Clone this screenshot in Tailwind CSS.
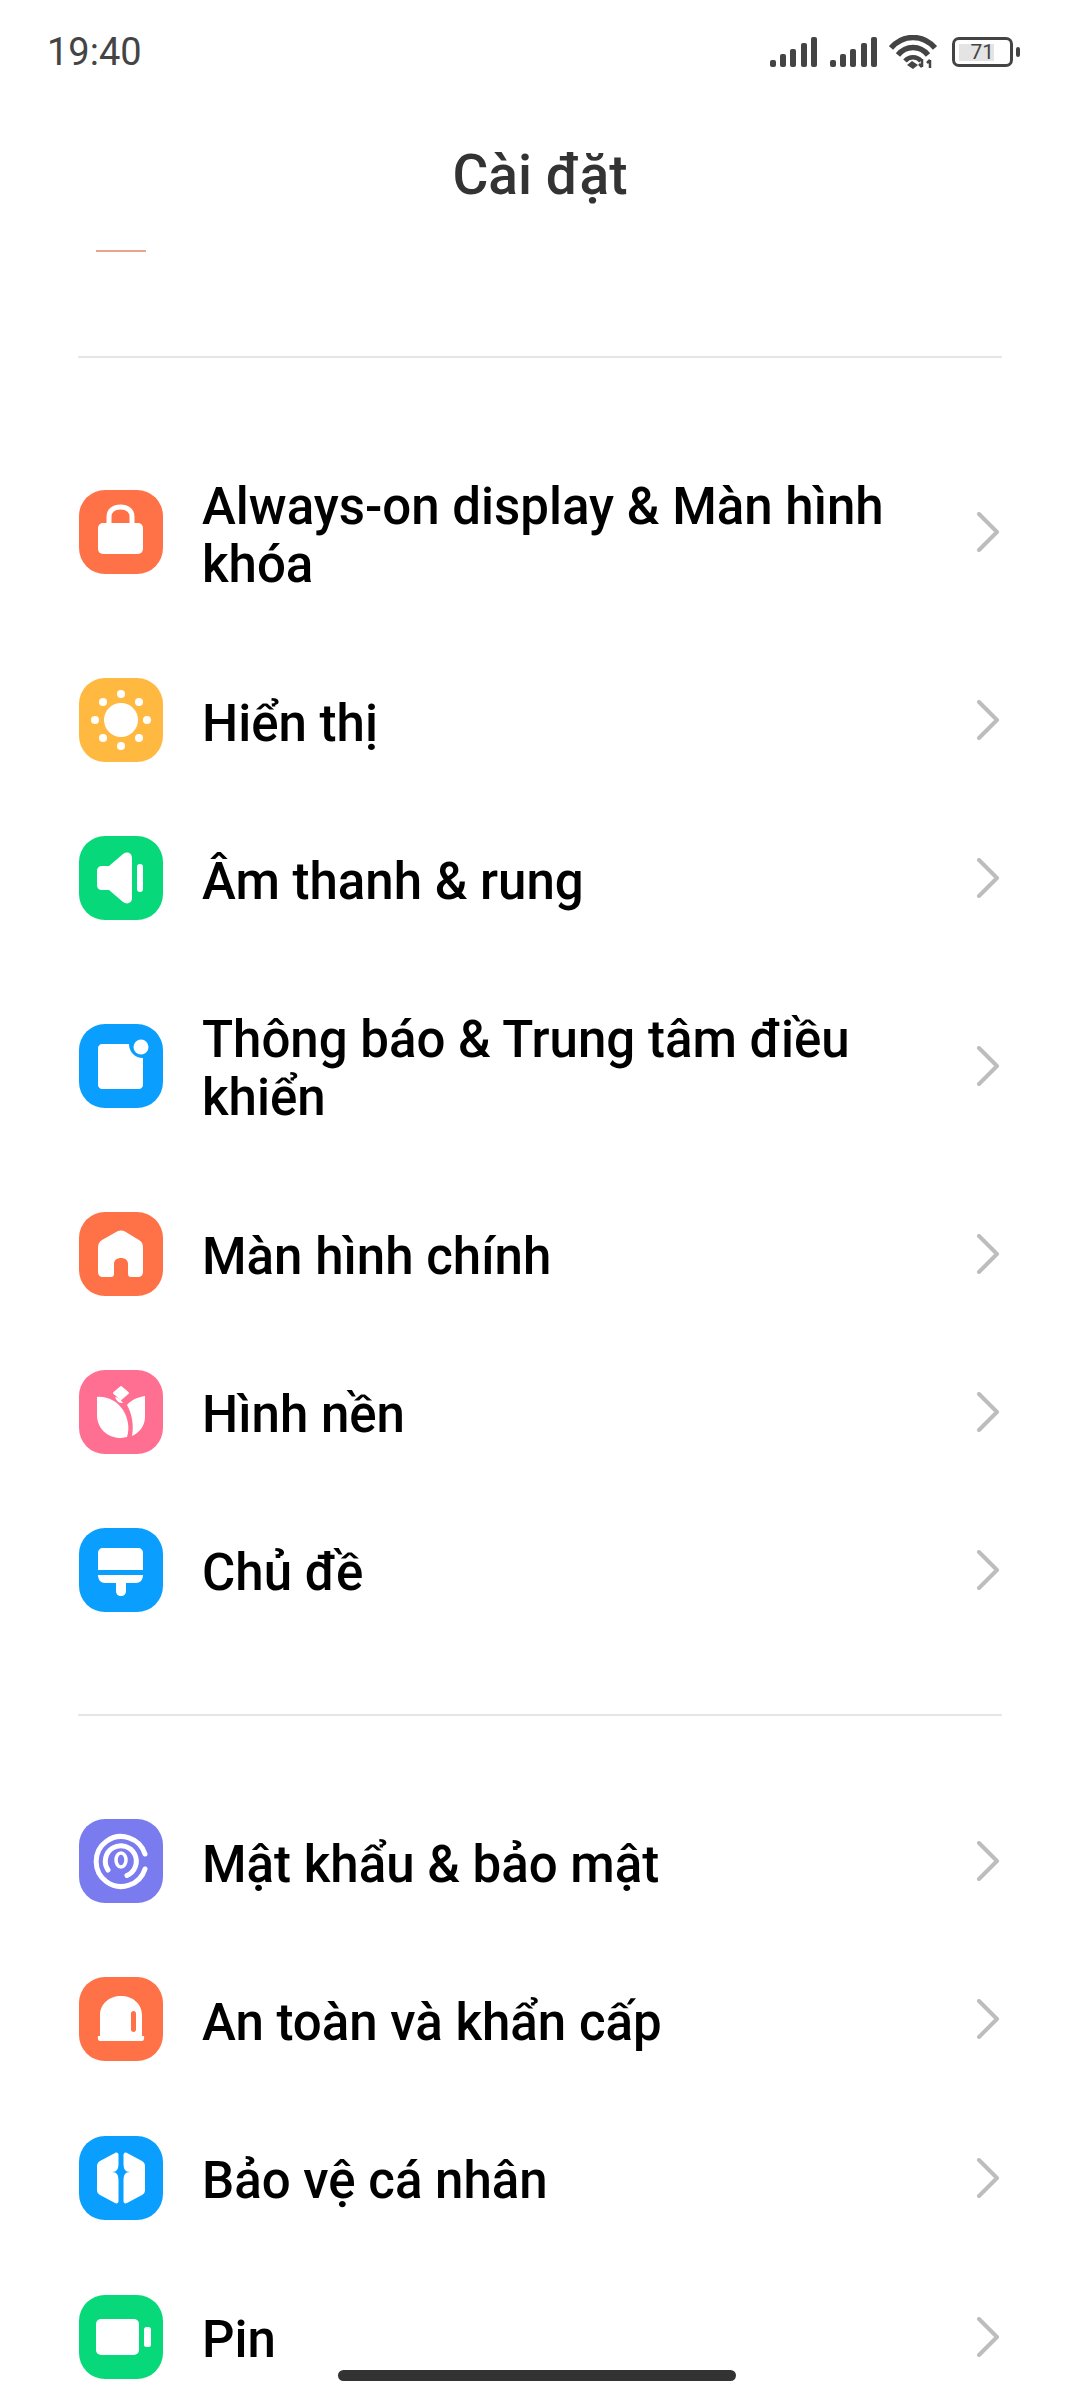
<!DOCTYPE html>
<html lang="vi">
<head>
  <meta charset="UTF-8" />
  <meta name="viewport" content="width=device-width, initial-scale=1.0"/>
  <title>Cài đặt</title>
  <script src="https://cdn.jsdelivr.net/npm/@tailwindcss/browser@4"></script>
</head>
<body class="bg-white">
<div class="relative w-[1080px] h-[2400px] overflow-hidden bg-white font-['Roboto',sans-serif]">

  <!-- STATUS BAR -->
  <div class="h-[104px] pl-[47px] pr-[60px] flex items-center justify-between text-[#444]">
    <span class="text-[38px] leading-none">19:40</span>
    <div class="flex items-center">
      <svg class="w-[47px] h-[30px]" viewBox="0 0 47 30" fill="#444"><rect x="0" y="23" width="6" height="7" rx="2"/><rect x="10" y="17" width="6" height="13" rx="2"/><rect x="20" y="12" width="6" height="18" rx="2"/><rect x="31" y="6" width="6" height="24" rx="2"/><rect x="41" y="0" width="6" height="30" rx="2"/></svg>
      <svg class="w-[47px] h-[30px] ml-[13px]" viewBox="0 0 47 30" fill="#444"><rect x="0" y="23" width="6" height="7" rx="2"/><rect x="10" y="17" width="6" height="13" rx="2"/><rect x="20" y="12" width="6" height="18" rx="2"/><rect x="31" y="6" width="6" height="24" rx="2"/><rect x="41" y="0" width="6" height="30" rx="2"/></svg>
      <svg class="w-[48px] h-[34px] ml-[12px]" viewBox="0 0 48 34" fill="none" stroke="#444" stroke-width="5.500"><path d="M2 13C14 -1 34 -1 46 13"/><path d="M9 20C17 10 31 10 39 20"/><path d="M16 26C20 21 28 21 32 26" stroke-width="4.500"/><path d="M23 26L29 30L24 34L18 30Z" fill="#444" stroke="none"/><path d="M33 24V32M33 32L30 29M41 33V25M41 25L38 28" stroke-width="2.500"/></svg>
      <div class="ml-[15px] w-[61px] h-[30px] rounded-[7px] border-[3px] border-[#444] pl-[4px] flex items-center">
        <div class="w-[35px] h-[17px] bg-[#e4e4e4] flex items-center justify-end text-[21px] leading-none text-[#444]">71</div>
      </div>
      <div class="ml-[3px] w-[4px] h-[10px] rounded-full bg-[#444]"></div>
    </div>
  </div>

  <!-- TITLE -->
  <h1 class="h-[144px] pb-[2px] flex items-center justify-center text-[55px] font-medium text-[#333]">Cài đặt</h1>

  <!-- scrolled-off icon edge -->
  <div class="mt-[2px] ml-[96px] w-[50px] h-[2px] bg-[#e9a48e]"></div>

  <div class="mt-[104px] mx-[78px] h-[2px] bg-[#e6e6e6]"></div>

  <!-- GROUP 1 -->
  <div class="mt-[65px]">
    <div class="h-[218px] pl-[79px] pr-[80px] flex items-center">
      <div class="w-[84px] h-[84px] shrink-0 rounded-[26px] bg-[#ff7146]">
        <svg class="w-[84px] h-[84px]" viewBox="0 0 84 84" fill="#fff"><path d="M30 36V27C30 20 35 17 41.500 17C48 17 53 20 53 27V36" fill="none" stroke="#fff" stroke-width="5"/><rect x="19" y="33" width="45" height="31" rx="5"/></svg>
      </div>
      <p class="ml-[39px] pt-[7px] w-[740px] text-[51px] font-medium leading-[58px] text-black">Always-on display &amp; Màn hình khóa</p>
      <svg class="ml-auto w-[24px] h-[40px]" viewBox="0 0 24 40" fill="none" stroke="#bdbdbd" stroke-width="4" stroke-linecap="round" stroke-linejoin="round"><path d="M3 2L21 20L3 38"/></svg>
    </div>
    <div class="h-[158px] pl-[79px] pr-[80px] flex items-center">
      <div class="w-[84px] h-[84px] shrink-0 rounded-[26px] bg-[#ffb940]">
        <svg class="w-[84px] h-[84px]" viewBox="0 0 84 84" fill="#fff"><circle cx="42" cy="42" r="17"/><circle cx="42" cy="16" r="4"/><circle cx="42" cy="68" r="4"/><circle cx="16" cy="42" r="4"/><circle cx="68" cy="42" r="4"/><circle cx="24" cy="24" r="4"/><circle cx="60" cy="24" r="4"/><circle cx="24" cy="60" r="4"/><circle cx="60" cy="60" r="4"/></svg>
      </div>
      <p class="ml-[39px] pt-[7px] w-[740px] text-[51px] font-medium leading-[58px] text-black">Hiển thị</p>
      <svg class="ml-auto w-[24px] h-[40px]" viewBox="0 0 24 40" fill="none" stroke="#bdbdbd" stroke-width="4" stroke-linecap="round" stroke-linejoin="round"><path d="M3 2L21 20L3 38"/></svg>
    </div>
    <div class="h-[158px] pl-[79px] pr-[80px] flex items-center">
      <div class="w-[84px] h-[84px] shrink-0 rounded-[26px] bg-[#07d97a]">
        <svg class="w-[84px] h-[84px]" viewBox="0 0 84 84" fill="#fff"><path d="M23 30H30L44 18C48 15 53 17 53 22V62C53 67 48 69 44 66L30 54H23C20 54 18 52 18 49V35C18 32 20 30 23 30Z"/><rect x="58" y="28" width="6" height="28" rx="3"/></svg>
      </div>
      <p class="ml-[39px] pt-[7px] w-[740px] text-[51px] font-medium leading-[58px] text-black">Âm thanh &amp; rung</p>
      <svg class="ml-auto w-[24px] h-[40px]" viewBox="0 0 24 40" fill="none" stroke="#bdbdbd" stroke-width="4" stroke-linecap="round" stroke-linejoin="round"><path d="M3 2L21 20L3 38"/></svg>
    </div>
    <div class="h-[218px] pl-[79px] pr-[80px] flex items-center">
      <div class="w-[84px] h-[84px] shrink-0 rounded-[26px] bg-[#0a9fff]">
        <svg class="w-[84px] h-[84px]" viewBox="0 0 84 84" fill="#fff"><path d="M23 20H50C50 28 56 34 64 34V61C64 63 62 65 60 65H23C21 65 19 63 19 61V24C19 22 21 20 23 20Z"/><circle cx="62" cy="23" r="7.500"/></svg>
      </div>
      <p class="ml-[39px] pt-[5px] w-[740px] text-[51px] font-medium leading-[58px] text-black">Thông báo &amp; Trung tâm điều khiển</p>
      <svg class="ml-auto w-[24px] h-[40px]" viewBox="0 0 24 40" fill="none" stroke="#bdbdbd" stroke-width="4" stroke-linecap="round" stroke-linejoin="round"><path d="M3 2L21 20L3 38"/></svg>
    </div>
    <div class="h-[158px] pl-[79px] pr-[80px] flex items-center">
      <div class="w-[84px] h-[84px] shrink-0 rounded-[26px] bg-[#ff7146]">
        <svg class="w-[84px] h-[84px]" viewBox="0 0 84 84" fill="#fff"><path d="M38 19.500C40.500 18 43.500 18 46 19.500L60 28C63 30 64 32 64 36V60C64 63 62 65 59 65H52C50 65 49 64 49 62V52C49 48 46 46 42 46C38 46 35 48 35 52V62C35 64 34 65 32 65H24C21 65 19 63 19 60V36C19 32 20 30 23 28Z"/></svg>
      </div>
      <p class="ml-[39px] pt-[5px] w-[740px] text-[51px] font-medium leading-[58px] text-black">Màn hình chính</p>
      <svg class="ml-auto w-[24px] h-[40px]" viewBox="0 0 24 40" fill="none" stroke="#bdbdbd" stroke-width="4" stroke-linecap="round" stroke-linejoin="round"><path d="M3 2L21 20L3 38"/></svg>
    </div>
    <div class="h-[158px] pl-[79px] pr-[80px] flex items-center">
      <div class="w-[84px] h-[84px] shrink-0 rounded-[26px] bg-[#ff6f92]">
        <svg class="w-[84px] h-[84px]" viewBox="0 0 84 84" fill="#fff"><path d="M42 17L49 23L42 29L35 23Z" stroke="#fff" stroke-width="2" stroke-linejoin="round"/><path d="M18 27C28 26 38 31 44 40C49 48 51 58 48 67C46 67 44 68 42 68C28 68 18 58 18 45Z"/><path d="M36 27C39 27 42 30 44 33C40 33 38 32 36 27Z"/><path d="M66 26V47C66 56 60 63 53 66C55 55 53 44 48 35C52 30 59 27 66 26Z"/></svg>
      </div>
      <p class="ml-[39px] pt-[5px] w-[740px] text-[51px] font-medium leading-[58px] text-black">Hình nền</p>
      <svg class="ml-auto w-[24px] h-[40px]" viewBox="0 0 24 40" fill="none" stroke="#bdbdbd" stroke-width="4" stroke-linecap="round" stroke-linejoin="round"><path d="M3 2L21 20L3 38"/></svg>
    </div>
    <div class="h-[158px] pl-[79px] pr-[80px] flex items-center">
      <div class="w-[84px] h-[84px] shrink-0 rounded-[26px] bg-[#0a9fff]">
        <svg class="w-[84px] h-[84px]" viewBox="0 0 84 84" fill="#fff"><path d="M24 20H59C62 20 64 22 64 25V42H19V25C19 22 21 20 24 20Z"/><path d="M19 47H64C64 52 61 55 57 55H47V63C47 66 45 68 42 68C39 68 37 66 37 63V55H26C22 55 19 52 19 47Z"/></svg>
      </div>
      <p class="ml-[39px] pt-[5px] w-[740px] text-[51px] font-medium leading-[58px] text-black">Chủ đề</p>
      <svg class="ml-auto w-[24px] h-[40px]" viewBox="0 0 24 40" fill="none" stroke="#bdbdbd" stroke-width="4" stroke-linecap="round" stroke-linejoin="round"><path d="M3 2L21 20L3 38"/></svg>
    </div>
  </div>

  <div class="mt-[65px] mx-[78px] h-[2px] bg-[#e6e6e6]"></div>

  <!-- GROUP 2 -->
  <div class="mt-[66px]">
    <div class="h-[158px] pl-[79px] pr-[80px] flex items-center">
      <div class="w-[84px] h-[84px] shrink-0 rounded-[26px] bg-[#7b7bf0]">
        <svg class="w-[84px] h-[84px]" viewBox="0 0 84 84" fill="none" stroke="#fff" stroke-linecap="round"><path d="M66 35A25 25 0 1 0 66 50" stroke-width="5"/><path d="M29 51A15.500 15.500 0 1 1 48 56.500" stroke-width="5"/><ellipse cx="42" cy="41" rx="5" ry="7" stroke-width="3.500"/></svg>
      </div>
      <p class="ml-[39px] pt-[7px] w-[740px] text-[51px] font-medium leading-[58px] text-black">Mật khẩu &amp; bảo mật</p>
      <svg class="ml-auto w-[24px] h-[40px]" viewBox="0 0 24 40" fill="none" stroke="#bdbdbd" stroke-width="4" stroke-linecap="round" stroke-linejoin="round"><path d="M3 2L21 20L3 38"/></svg>
    </div>
    <div class="h-[158px] pl-[79px] pr-[80px] flex items-center">
      <div class="w-[84px] h-[84px] shrink-0 rounded-[26px] bg-[#ff7146]">
        <svg class="w-[84px] h-[84px]" viewBox="0 0 84 84" fill="#fff"><path fill-rule="evenodd" d="M21 59V38C21 27 30 19 42 19C54 19 63 27 63 38V59H65C65.500 61 65 64 63 64H21C19 64 18.500 61 19 59ZM54.500 34C53 34 52 35 52 36.500V52.500C52 54 53 55 54.500 55C56 55 57 54 57 52.500V36.500C57 35 56 34 54.500 34Z"/></svg>
      </div>
      <p class="ml-[39px] pt-[7px] w-[740px] text-[51px] font-medium leading-[58px] text-black">An toàn và khẩn cấp</p>
      <svg class="ml-auto w-[24px] h-[40px]" viewBox="0 0 24 40" fill="none" stroke="#bdbdbd" stroke-width="4" stroke-linecap="round" stroke-linejoin="round"><path d="M3 2L21 20L3 38"/></svg>
    </div>
    <div class="h-[160px] pl-[79px] pr-[80px] flex items-center">
      <div class="w-[84px] h-[84px] shrink-0 rounded-[26px] bg-[#0a9fff]">
        <svg class="w-[84px] h-[84px]" viewBox="0 0 84 84" fill="#fff"><path d="M39.500 19V27C39.500 33 38 36 33 36C38 36 39.500 39 39.500 45V65C39.500 67 38 68 36 67L21 59C19 58 18 56 18 54V30C18 28 19 26 21 25L36 17C38 16 39.500 17 39.500 19Z"/><path d="M44.500 19V27C44.500 33 46 36 51 36C46 36 44.500 39 44.500 45V65C44.500 67 46 68 48 67L63 59C65 58 66 56 66 54V30C66 28 65 26 63 25L48 17C46 16 44.500 17 44.500 19Z"/></svg>
      </div>
      <p class="ml-[39px] pt-[6px] w-[740px] text-[51px] font-medium leading-[58px] text-black">Bảo vệ cá nhân</p>
      <svg class="ml-auto w-[24px] h-[40px]" viewBox="0 0 24 40" fill="none" stroke="#bdbdbd" stroke-width="4" stroke-linecap="round" stroke-linejoin="round"><path d="M3 2L21 20L3 38"/></svg>
    </div>
    <div class="h-[158px] pl-[79px] pr-[80px] flex items-center">
      <div class="w-[84px] h-[84px] shrink-0 rounded-[26px] bg-[#07d97a]">
        <svg class="w-[84px] h-[84px]" viewBox="0 0 84 84" fill="#fff"><rect x="17" y="24" width="43" height="36" rx="5"/><rect x="65" y="32" width="7" height="20" rx="2.500"/></svg>
      </div>
      <p class="ml-[39px] pt-[5px] w-[740px] text-[51px] font-medium leading-[58px] text-black">Pin</p>
      <svg class="ml-auto w-[24px] h-[40px]" viewBox="0 0 24 40" fill="none" stroke="#bdbdbd" stroke-width="4" stroke-linecap="round" stroke-linejoin="round"><path d="M3 2L21 20L3 38"/></svg>
    </div>
  </div>

  <!-- HOME BAR -->
  <div class="absolute left-[338px] top-[2370px] w-[398px] h-[11px] rounded-full bg-[#333]"></div>
</div>
</body>
</html>
